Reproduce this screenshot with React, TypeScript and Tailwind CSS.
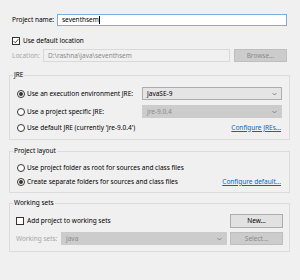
import React from 'react'

function Radio({ checked }: { checked?: boolean }) {
  return (
    <span className="flex h-[8px] w-[8px] shrink-0 items-center justify-center rounded-full border border-[#333333] bg-white">
      {checked && <span className="h-[4px] w-[4px] rounded-full bg-[#333333]" />}
    </span>
  )
}

function Check({ checked }: { checked?: boolean }) {
  return (
    <span className="flex h-[8px] w-[8px] shrink-0 items-center justify-center border border-[#333333] bg-white">
      {checked && (
        <svg width="6" height="6" viewBox="0 0 6 6">
          <path d="M0.6 3.1 L2.3 4.8 L5.4 1.2" fill="none" stroke="#333" strokeWidth="0.9" />
        </svg>
      )}
    </span>
  )
}

function Chevron() {
  return (
    <svg width="5" height="4" viewBox="0 0 5 4" className="shrink-0">
      <path d="M0.5 1 L2.5 3 L4.5 1" fill="none" stroke="#777" strokeWidth="0.8" />
    </svg>
  )
}

function Combo({ value, disabled, className }: { value: string; disabled?: boolean; className: string }) {
  return (
    <div
      className={
        disabled
          ? `flex h-[13px] items-center justify-between border border-[#cccccc] bg-[#cccccc] pl-[4px] pr-[4px] text-[#8a8a8a] ${className}`
          : `flex h-[13px] items-center justify-between border border-[#adadad] bg-[#e5e5e5] pl-[4px] pr-[4px] ${className}`
      }
    >
      <span>{value}</span>
      <Chevron />
    </div>
  )
}

function Button({ label, disabled }: { label: string; disabled?: boolean }) {
  return (
    <div
      className={
        disabled
          ? 'flex h-[13px] w-[53px] shrink-0 items-center justify-center border border-[#bfbfbf] bg-[#cccccc] text-[#8a8a8a]'
          : 'flex h-[14px] w-[53px] shrink-0 items-center justify-center border border-[#adadad] bg-[#e1e1e1]'
      }
    >
      {label}
    </div>
  )
}

function Link({ label }: { label: string }) {
  return <span className="ml-auto text-[#0066cc] underline underline-offset-[1px]">{label}</span>
}

export default function App() {
  return (
    <div className="h-[280px] w-[300px] whitespace-nowrap bg-[#f0f0f0] pt-[14px] font-['Noto_Sans',sans-serif] text-[6.5px] leading-[8px] text-black">
      <div className="flex h-[12px] items-center pl-[12px] pr-[13px]">
        <span className="w-[45px] shrink-0">Project name:</span>
        <div className="flex h-[12px] flex-1 items-center border border-[#7aaee3] bg-white pl-[4px]">
          <span>seventhsem</span>
          <span className="h-[8px] w-[1px] bg-black" />
        </div>
      </div>

      <div className="mt-[11px] flex h-[8px] items-center gap-[3px] pl-[12px]">
        <Check checked />
        <span>Use default location</span>
      </div>

      <div className="mt-[4px] flex h-[13px] items-center pl-[12px] pr-[13px]">
        <span className="w-[31px] shrink-0 text-[#a6a6a6]">Location:</span>
        <div className="flex h-[13px] flex-1 items-center border border-[#d9d9d9] bg-[#f0f0f0] pl-[4px] text-[#8a8a8a]">
          D:\rashna\java\seventhsem
        </div>
        <div className="ml-[4px]">
          <Button label="Browse..." disabled />
        </div>
      </div>

      <fieldset className="ml-[9px] mt-[9px] w-[281px] border border-[#dcdcdc] pb-[5px] pl-[7px] pr-[7px] pt-[8px]">
        <legend className="ml-[-4px] px-[1px]">JRE</legend>
        <div className="flex h-[13px] items-center gap-[2px]">
          <Radio checked />
          <span>Use an execution environment JRE:</span>
          <Combo value="JavaSE-9" className="ml-auto w-[140px]" />
        </div>
        <div className="mt-[5px] flex h-[13px] items-center gap-[2px]">
          <Radio />
          <span>Use a project specific JRE:</span>
          <Combo value="jre-9.0.4" disabled className="ml-auto w-[140px]" />
        </div>
        <div className="mt-[3px] flex h-[13px] items-center gap-[2px] pr-[1px]">
          <Radio />
          <span>Use default JRE (currently 'jre-9.0.4')</span>
          <Link label="Configure JREs..." />
        </div>
      </fieldset>

      <fieldset className="ml-[9px] mt-[7px] w-[281px] border border-[#dcdcdc] pb-[4px] pl-[7px] pr-[8px] pt-[6px]">
        <legend className="ml-[-4px] px-[1px]">Project layout</legend>
        <div className="flex h-[13px] items-center gap-[2px]">
          <Radio />
          <span>Use project folder as root for sources and class files</span>
        </div>
        <div className="mt-[1px] flex h-[13px] items-center gap-[2px]">
          <Radio checked />
          <span>Create separate folders for sources and class files</span>
          <Link label="Configure default..." />
        </div>
      </fieldset>

      <fieldset className="ml-[9px] mt-[6px] w-[281px] border border-[#dcdcdc] pb-[6px] pl-[6px] pr-[6px] pt-[7px]">
        <legend className="ml-[-3px] px-[1px]">Working sets</legend>
        <div className="flex h-[14px] items-center gap-[3px]">
          <Check />
          <span>Add project to working sets</span>
          <div className="ml-auto">
            <Button label="New..." />
          </div>
        </div>
        <div className="mt-[4px] flex h-[13px] items-center">
          <span className="w-[45px] shrink-0 text-[#a6a6a6]">Working sets:</span>
          <Combo value="java" disabled className="flex-1" />
          <div className="ml-[3px]">
            <Button label="Select..." disabled />
          </div>
        </div>
      </fieldset>
    </div>
  )
}
